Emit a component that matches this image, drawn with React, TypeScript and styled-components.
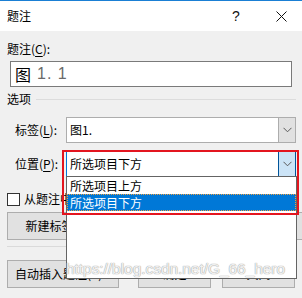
import React from 'react'
import styled, { createGlobalStyle } from 'styled-components'

const GlobalStyle = createGlobalStyle`
  html, body {
    margin: 0;
    padding: 0;
    background: #f0f0f0;
  }
`

const FONT = `"Microsoft YaHei", "Noto Sans CJK SC", "Noto Sans", sans-serif`

const Dialog = styled.div`
  position: relative;
  width: 302px;
  height: 298px;
  overflow: hidden;
  background: #f0f0f0;
  font-family: ${FONT};
  font-size: 12px;
  line-height: 16px;
  color: #000;
`

const TitleBar = styled.div`
  display: flex;
  align-items: center;
  height: 30px;
  border-top: 1px solid #1a7fd4;
  background: #fff;
  padding-left: 7px;
`

const Title = styled.div`
  flex: 1;
`

const TitleButton = styled.div<{ $w: number }>`
  display: flex;
  align-items: center;
  justify-content: center;
  width: ${(p) => p.$w}px;
  height: 30px;
  font-family: 'Liberation Sans', sans-serif;
  font-size: 14px;
  color: #111;
`

const Body = styled.div`
  display: flex;
  flex-direction: column;
  padding: 10px 6px 0 7px;
`

const Mnemonic = styled.span`
  text-decoration: underline;
  text-underline-offset: 2px;
`

const CaptionInput = styled.div`
  margin: 4px 0 0 3px;
  width: 282px;
  height: 26px;
  box-sizing: border-box;
  border: 1px solid #7a7a7a;
  background: #fff;
  display: flex;
  align-items: center;
  padding-left: 4px;
  font-size: 16px;
  color: #000;
`

const Digits = styled.span`
  margin-left: 6px;
  color: #6a6a6a;
  font-family: 'Liberation Sans', sans-serif;
  letter-spacing: 1px;
`

const SectionHeader = styled.div`
  display: flex;
  align-items: center;
  gap: 5px;
  margin-top: 4px;

  &::after {
    content: '';
    flex: 1;
    height: 1px;
    background: #dcdcdc;
  }
`

const FieldRow = styled.div<{ $mt: number }>`
  display: flex;
  align-items: center;
  margin-top: ${(p) => p.$mt}px;
  padding-left: 8px;
`

const FieldLabel = styled.div`
  width: 51px;
`

const ComboWrap = styled.div`
  position: relative;
`

const Combo = styled.div<{ $open?: boolean }>`
  display: flex;
  align-items: stretch;
  width: 230px;
  height: 26px;
  box-sizing: border-box;
  border: 1px solid ${(p) => (p.$open ? '#0078d7' : '#adadad')};
  background: #fff;
`

const ComboText = styled.div`
  flex: 1;
  display: flex;
  align-items: center;
  padding-left: 3px;
`

const ComboButton = styled.div<{ $open?: boolean }>`
  display: flex;
  align-items: center;
  justify-content: center;
  width: 17px;
  box-sizing: border-box;
  background: ${(p) => (p.$open ? '#cce4f7' : '#e1e1e1')};
  border-left: 1px solid ${(p) => (p.$open ? '#005499' : '#adadad')};
  ${(p) => (p.$open ? 'border: 1px solid #005499; margin: -1px -1px -1px 0; width: 18px;' : '')}
`

const Highlight = styled.div`
  position: absolute;
  left: -4px;
  top: -1px;
  width: 237px;
  height: 65px;
  box-sizing: border-box;
  border: 2px solid #e3151f;
  z-index: 3;
  pointer-events: none;
`

const ListBox = styled.div`
  position: absolute;
  left: 0;
  top: calc(100% - 1px);
  width: 231px;
  height: 103px;
  box-sizing: border-box;
  border: 1px solid #646464;
  background: #fff;
  z-index: 2;
`

const ListItem = styled.div<{ $selected?: boolean }>`
  height: 17px;
  box-sizing: border-box;
  padding-left: 2px;
  display: flex;
  align-items: center;
  background: ${(p) => (p.$selected ? '#0078d7' : '#fff')};
  color: ${(p) => (p.$selected ? '#fff' : '#000')};
  border: 1px dotted ${(p) => (p.$selected ? '#f0a040' : 'transparent')};
`

const CheckRow = styled.div`
  display: flex;
  align-items: center;
  gap: 4px;
  margin-top: 14px;
`

const CheckBox = styled.div`
  width: 13px;
  height: 13px;
  box-sizing: border-box;
  border: 1px solid #333;
  background: #fff;
`

const ButtonRow = styled.div<{ $mt: number }>`
  display: flex;
  gap: 10px;
  margin-top: ${(p) => p.$mt}px;
`

const Button = styled.div<{ $w: number; $ml?: number; $left?: boolean }>`
  display: flex;
  align-items: center;
  justify-content: ${(p) => (p.$left ? 'flex-start' : 'center')};
  padding-left: ${(p) => (p.$left ? 7 : 0)}px;
  width: ${(p) => p.$w}px;
  flex-shrink: 0;
  height: 28px;
  margin-left: ${(p) => p.$ml ?? 0}px;
  box-sizing: border-box;
  border: 1px solid #adadad;
  background: #e1e1e1;
  white-space: nowrap;
  overflow: hidden;
`

const Separator = styled.div`
  height: 1px;
  margin-top: 6px;
  background: #dadada;
`

const Watermark = styled.div`
  position: absolute;
  left: 66px;
  top: 261px;
  z-index: 5;
  font-family: 'Liberation Sans', Arial, sans-serif;
  font-size: 15.5px;
  letter-spacing: -0.05px;
  color: rgba(252, 252, 252, 0.9);
  text-shadow: 0 0 1px #a0a0a0, 0 0 1px #a0a0a0;
  pointer-events: none;
`

const Chevron = () => (
  <svg width="9" height="6" viewBox="0 0 9 6">
    <polyline points="0.5,0.8 4.5,4.8 8.5,0.8" fill="none" stroke="#5a5a5a" strokeWidth="1" />
  </svg>
)

const CloseIcon = () => (
  <svg width="11" height="11" viewBox="0 0 11 11">
    <line x1="0.5" y1="0.5" x2="10.5" y2="10.5" stroke="#111" strokeWidth="1" />
    <line x1="10.5" y1="0.5" x2="0.5" y2="10.5" stroke="#111" strokeWidth="1" />
  </svg>
)

const positions = ['所选项目上方', '所选项目下方']

export default function App() {
  return (
    <>
      <GlobalStyle />
      <Dialog>
        <TitleBar>
          <Title>题注</Title>
          <TitleButton $w={48}>?</TitleButton>
          <TitleButton $w={42}>
            <CloseIcon />
          </TitleButton>
        </TitleBar>
        <Body>
          <div>
            题注(<Mnemonic>C</Mnemonic>):
          </div>
          <CaptionInput>
            图<Digits>1. 1</Digits>
          </CaptionInput>
          <SectionHeader>选项</SectionHeader>
          <FieldRow $mt={10}>
            <FieldLabel>
              标签(<Mnemonic>L</Mnemonic>):
            </FieldLabel>
            <Combo>
              <ComboText>图1.</ComboText>
              <ComboButton>
                <Chevron />
              </ComboButton>
            </Combo>
          </FieldRow>
          <FieldRow $mt={8}>
            <FieldLabel>
              位置(<Mnemonic>P</Mnemonic>):
            </FieldLabel>
            <ComboWrap>
              <Combo $open>
                <ComboText>所选项目下方</ComboText>
                <ComboButton $open>
                  <Chevron />
                </ComboButton>
              </Combo>
              <Highlight />
              <ListBox>
                {positions.map((p, i) => (
                  <ListItem key={p} $selected={i === 1}>
                    {p}
                  </ListItem>
                ))}
              </ListBox>
            </ComboWrap>
          </FieldRow>
          <CheckRow>
            <CheckBox />
            <span>从题注中排除标签(E)</span>
          </CheckRow>
          <ButtonRow $mt={5}>
            <Button $w={112}>新建标签(N)...</Button>
            <Button $w={90}>删除标签(D)</Button>
            <Button $w={80}>编号(U)...</Button>
          </ButtonRow>
          <Separator />
          <ButtonRow $mt={13}>
            <Button $w={112} $left>
              自动插入题注(A)...
            </Button>
            <Button $w={73} $ml={9}>
              确定
            </Button>
            <Button $w={73} $ml={1}>
              关闭
            </Button>
          </ButtonRow>
        </Body>
        <Watermark>https://blog.csdn.net/G_66_hero</Watermark>
      </Dialog>
    </>
  )
}
